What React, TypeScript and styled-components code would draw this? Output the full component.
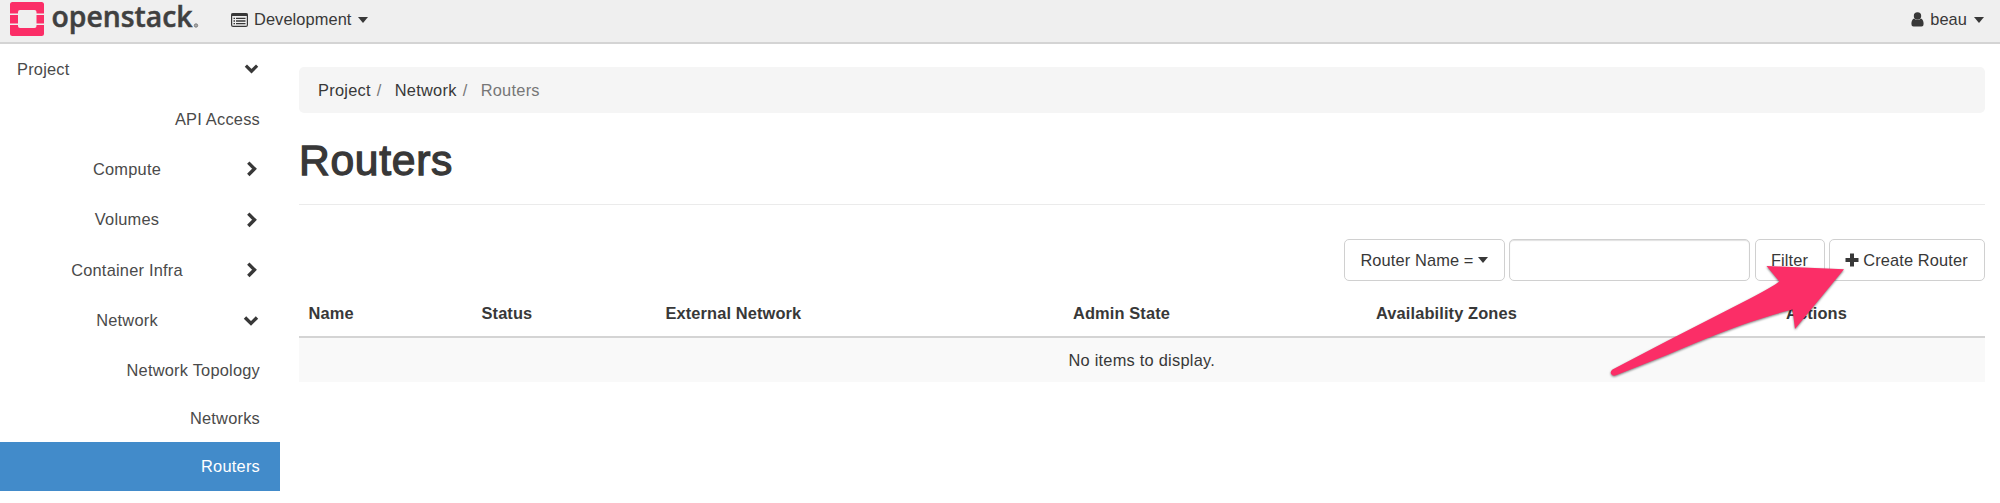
import React from 'react';
import styled, { createGlobalStyle, css } from 'styled-components';

const GlobalStyle = createGlobalStyle`
  * { box-sizing: border-box; }
  body {
    margin: 0;
    background: #fff;
    color: #383838;
    font: 16.4px/23px "Liberation Sans", Arial, sans-serif;
  }
`;

const Page = styled.div`
  position: relative;
  height: 503px;
  overflow: hidden;
`;

const Header = styled.header`
  display: flex;
  height: 44px;
  padding: 0 16px 0 10px;
  background: #efefef;
  border-bottom: 2px solid #d4d4d4;
`;

const Logo = styled.svg`
  display: block;
  width: 190px;
  height: 40px;
  overflow: visible;
`;

const HeaderItem = styled.div<{ $end?: boolean }>`
  display: flex;
  align-items: center;
  height: 39px;
  margin-left: ${p => (p.$end ? 'auto' : '31px')};
  letter-spacing: 0.08px;
  svg { display: block; }
`;

const HeaderLabel = styled.span`
  margin: 0 7px 0 6px;
`;

const Caret = styled.i`
  width: 0;
  height: 0;
  border: 5px solid transparent;
  border-top: 6px solid #383838;
  border-bottom: 0;
`;

const Body = styled.div`
  display: flex;
`;

const Sidebar = styled.nav`
  width: 280px;
  flex: none;
  letter-spacing: 0.22px;
`;

const NavRow = styled.div<{ $h: number; $active?: boolean }>`
  display: flex;
  align-items: center;
  height: ${p => p.$h}px;
  padding: 0 20px 0 17px;
  color: #4a4a4a;
  ${p => p.$active && css`
    background: #428bca;
    color: #fff;
  `}
`;

const NavLabel = styled.span<{ $align: 'left' | 'center' | 'right' }>`
  flex: 1;
  text-align: ${p => p.$align};
`;

const ChevronBox = styled.span<{ $center: boolean }>`
  display: flex;
  justify-content: flex-end;
  width: ${p => (p.$center ? '23px' : '16px')};
  padding-right: 1px;
`;

const Main = styled.main`
  flex: 1;
  padding: 23px 15.5px 0 19px;
`;

const Breadcrumb = styled.div`
  display: flex;
  align-items: center;
  height: 46px;
  padding: 1px 0 0 19px;
  border-radius: 5px;
  background: #f5f5f5;
  letter-spacing: 0.25px;
`;

const Slash = styled.span`
  width: 24px;
  padding-left: 6px;
  color: #777;
`;

const Current = styled.span`
  color: #777;
`;

const Title = styled.h1`
  height: 92px;
  margin: 0;
  padding-top: 23px;
  border-bottom: 1px solid #ebebeb;
  font-size: 42.6px;
  font-weight: 400;
  line-height: 48px;
  letter-spacing: 0.7px;
  -webkit-text-stroke: 1.3px #383838;
`;

const Toolbar = styled.div`
  display: flex;
  justify-content: flex-end;
  margin-top: 34px;
`;

const Button = styled.button<{ $w: number; $gap?: number }>`
  display: flex;
  align-items: center;
  justify-content: center;
  gap: 4px;
  width: ${p => p.$w}px;
  height: 42px;
  margin-left: ${p => p.$gap ?? 0}px;
  padding: 0;
  border: 1.5px solid #d0d0d0;
  border-radius: 5px;
  background: #fff;
  color: #383838;
  font: inherit;
  letter-spacing: 0.12px;
`;

const Search = styled.input`
  width: 241px;
  height: 42px;
  margin-left: 4px;
  border: 1.5px solid #d0d0d0;
  border-radius: 5px;
  background: #fff;
  box-shadow: inset 0 1px 1px rgba(0, 0, 0, 0.12);
`;

const Table = styled.table`
  width: 100%;
  margin-top: 9px;
  border-collapse: collapse;
  table-layout: fixed;
`;

const Th = styled.th<{ $w?: number }>`
  width: ${p => (p.$w ? `${p.$w}px` : 'auto')};
  height: 47px;
  padding: 0 9.5px;
  border-bottom: 2px solid #d4d4d4;
  text-align: left;
  letter-spacing: 0.12px;
`;

const Empty = styled.td`
  height: 45px;
  padding: 0;
  background: #f9f9f9;
  text-align: center;
  letter-spacing: 0.24px;
`;

const Arrow = styled.svg`
  position: absolute;
  left: 1600px;
  top: 255px;
  filter: drop-shadow(0 1px 1px rgba(0, 0, 0, 0.5));
`;

const Chevron = ({ down }: { down: boolean }) =>
  down ? (
    <svg width="16" height="12" viewBox="0 0 16 12">
      <path d="M2 2.5 8 8.4 14 2.5" fill="none" stroke="#383838" strokeWidth="3.4" />
    </svg>
  ) : (
    <svg width="13" height="16" viewBox="0 0 13 16">
      <path d="M2.3 1.6 8.5 7.8 2.3 14" fill="none" stroke="#383838" strokeWidth="3.4" />
    </svg>
  );

type Item = { label: string; h: number; align: 'left' | 'center' | 'right'; open?: boolean; active?: boolean };

const items: Item[] = [
  { label: 'Project', h: 50, align: 'left', open: true },
  { label: 'API Access', h: 50, align: 'right' },
  { label: 'Compute', h: 50, align: 'center', open: false },
  { label: 'Volumes', h: 51, align: 'center', open: false },
  { label: 'Container Infra', h: 50, align: 'center', open: false },
  { label: 'Network', h: 51, align: 'center', open: true },
  { label: 'Network Topology', h: 49, align: 'right' },
  { label: 'Networks', h: 47, align: 'right' },
  { label: 'Routers', h: 49, align: 'right', active: true },
];

const columns: [string, number?][] = [
  ['Name', 173],
  ['Status', 184],
  ['External Network', 407.5],
  ['Admin State', 303],
  ['Availability Zones', 410],
  ['Actions'],
];

export default function App() {
  return (
    <>
      <GlobalStyle />
      <Page>
        <Header>
          <Logo viewBox="0 0 190 40">
            <g fill="#fb2e67">
              <path d="M2.5 2H31.5Q34 2 34 4.5V13.5H26.5V12Q26.5 10 24.5 10H10Q8 10 8 12V13.5H0V4.5Q0 2 2.5 2Z" />
              <path d="M0 15H8V23.5H0ZM26.5 15H34V23.5H26.5Z" />
              <path d="M0 25H8V26Q8 28 10 28H24.5Q26.5 28 26.5 26V25H34V33.5Q34 36 31.5 36H2.5Q0 36 0 33.5Z" />
            </g>
            <text x="41.5" y="27" fontFamily="Open Sans, sans-serif" fontSize="29.5" fontWeight="600" fill="#404040" stroke="#404040" strokeWidth="0.5" textLength="141" lengthAdjust="spacingAndGlyphs">openstack</text>
            <circle cx="186" cy="25.5" r="1.7" fill="#aaa" stroke="#777" strokeWidth="0.9" />
          </Logo>
          <HeaderItem>
            <svg width="17" height="14" viewBox="0 0 17 14">
              <rect x="0.6" y="0.6" width="15.8" height="12.8" rx="1.5" fill="none" stroke="#383838" strokeWidth="1.2" />
              <path d="M0.5 0.5H16.5V3H0.5Z" fill="#383838" />
              <path d="M2.5 5.3H4M5 5.3H14.5M2.5 8H4M5 8H14.5M2.5 10.7H4M5 10.7H14.5" stroke="#383838" strokeWidth="1.3" />
            </svg>
            <HeaderLabel>Development</HeaderLabel>
            <Caret />
          </HeaderItem>
          <HeaderItem $end>
            <svg width="13" height="15" viewBox="0 0 13 15">
              <circle cx="6.5" cy="4" r="3.7" fill="#383838" />
              <path d="M3 6.5Q6.5 9.500 10 6.5Q12.6 7.5 12.6 12Q12.6 14.5 10.5 14.5H2.5Q0.4 14.5 0.4 12Q0.4 7.5 3 6.5Z" fill="#383838" />
            </svg>
            <HeaderLabel>beau</HeaderLabel>
            <Caret />
          </HeaderItem>
        </Header>
        <Body>
          <Sidebar>
            {items.map(i => (
              <NavRow key={i.label} $h={i.h} $active={i.active}>
                <NavLabel $align={i.align}>{i.label}</NavLabel>
                {i.open !== undefined && (
                  <ChevronBox $center={i.align === 'center'}>
                    <Chevron down={i.open} />
                  </ChevronBox>
                )}
              </NavRow>
            ))}
          </Sidebar>
          <Main>
            <Breadcrumb>
              <span>Project</span>
              <Slash>/</Slash>
              <span>Network</span>
              <Slash>/</Slash>
              <Current>Routers</Current>
            </Breadcrumb>
            <Title>Routers</Title>
            <Toolbar>
              <Button $w={161}>
                Router Name = <Caret />
              </Button>
              <Search aria-label="Router name" />
              <Button $w={70} $gap={5}>Filter</Button>
              <Button $w={156} $gap={4}>
                <svg width="14" height="14" viewBox="0 0 14 14">
                  <path d="M7 0.5V13.5M0.5 7H13.5" stroke="#383838" strokeWidth="4" />
                </svg>
                Create Router
              </Button>
            </Toolbar>
            <Table>
              <thead>
                <tr>
                  {columns.map(([label, w]) => (
                    <Th key={label} $w={w}>{label}</Th>
                  ))}
                </tr>
              </thead>
              <tbody>
                <tr>
                  <Empty colSpan={6}>No items to display.</Empty>
                </tr>
              </tbody>
            </Table>
          </Main>
        </Body>
        <Arrow width="260" height="130" viewBox="0 0 260 130">
          <path d="M244 14.3 166.5 11 179.3 26.5Q172 32 150 43.5Q110 64 67 86L12.5 114.5Q10 116.5 11 118.7Q12.5 121.5 16 120.3L67 100Q130 73 160 64Q178 58 192.5 54.5L195 74Z" fill="#fb2e67" />
        </Arrow>
      </Page>
    </>
  );
}
